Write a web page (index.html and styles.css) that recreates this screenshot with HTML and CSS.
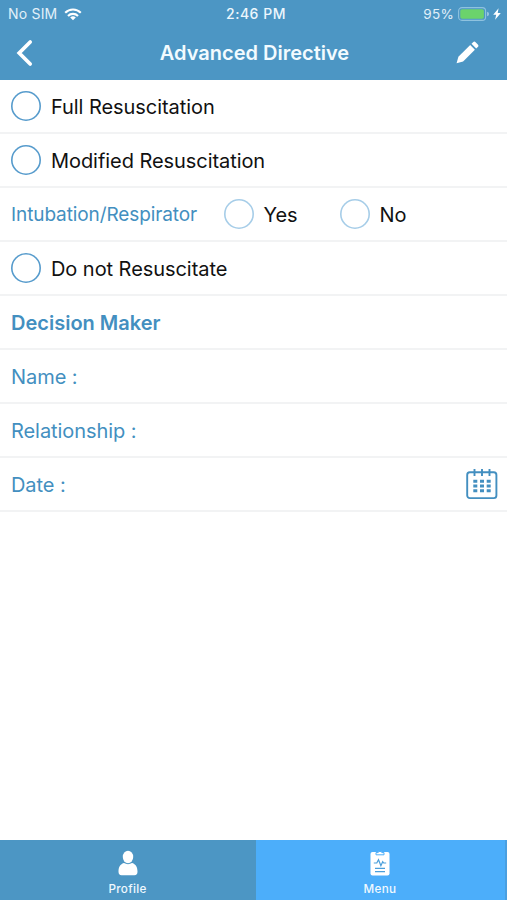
FILE: index.html
```html
<!DOCTYPE html>
<html lang="en">
<head>
<meta charset="utf-8">
<title>Advanced Directive</title>
<link rel="stylesheet" href="styles.css">
</head>
<body>
<div class="screen">
  <header class="header">
    <div class="status">
      <div class="carrier">
        <span class="sim">No SIM</span>
        <svg class="wifi" width="18" height="13" viewBox="0 0 18 13" fill="none" stroke="#fff" stroke-width="2.1"><path d="M1.2 4.8a11 11 0 0 1 15.6 0M4 8a7 7 0 0 1 10 0"/><path d="M9 12.3 6.2 9.6a4 4 0 0 1 5.6 0z" fill="#fff" stroke="none"/></svg>
      </div>
      <span class="time">2:46 PM</span>
      <div class="power">
        <span class="percent">95%</span>
        <svg class="battery" width="32" height="14" viewBox="0 0 32 14"><rect x=".6" y=".6" width="27" height="12.8" rx="3.4" fill="none" stroke="#8fc2df" stroke-width="1.1"/><rect x="2.3" y="2.3" width="23.6" height="9.4" rx="1.8" fill="#6bd36c"/><path d="M29.2 4.8q1.7.5 1.7 2.2t-1.7 2.2z" fill="#a9cfe6"/></svg>
        <svg class="bolt" width="8" height="12" viewBox="0 0 8 12"><path d="M5.6.3.2 6.7h3L2.1 11.8 7.8 5H4.7z" fill="#fff"/></svg>
      </div>
    </div>
    <div class="nav">
      <svg class="back" width="17" height="28" viewBox="0 0 17 28"><path d="M14.2 3 3.2 14l11 11" fill="none" stroke="#fff" stroke-width="3.7" stroke-linecap="round" stroke-linejoin="miter"/></svg>
      <h1 class="title">Advanced Directive</h1>
      <svg class="edit" width="23" height="23" viewBox="0 0 23 23" fill="#fff"><path d="m.6 22.2 1.8-6.4L14.2 4.1l4.7 4.7L7.1 20.5z"/><path d="m15.5 2.8 1.6-1.6q1.2-1.2 2.5 0l2.2 2.2q1.3 1.3 0 2.6l-1.6 1.5z"/></svg>
    </div>
  </header>
  <main class="form">
    <label class="row"><span class="radio"></span><span class="text">Full Resuscitation</span></label>
    <label class="row"><span class="radio"></span><span class="text">Modified Resuscitation</span></label>
    <div class="row">
      <span class="label intubation">Intubation/Respirator</span>
      <label class="option"><span class="radio light"></span><span class="text">Yes</span></label>
      <label class="option"><span class="radio light"></span><span class="text">No</span></label>
    </div>
    <label class="row"><span class="radio"></span><span class="text">Do not Resuscitate</span></label>
    <div class="row"><h2 class="label heading">Decision Maker</h2></div>
    <div class="row"><span class="label">Name :</span></div>
    <div class="row"><span class="label">Relationship :</span></div>
    <div class="row"><span class="label">Date :</span>
      <svg class="calendar" width="32" height="32" viewBox="0 0 32 32"><rect x="1.2" y="4.3" width="29.2" height="25.8" rx="2.6" fill="none" stroke="#438fc0" stroke-width="1.9"/><path d="M8.5 1v7M16 1v7M23.5 1v7" stroke="#438fc0" stroke-width="1.9"/><path d="M7.3 13.2h17.4M7.3 18h17.4M7.3 22.8h17.4" stroke="#438fc0" stroke-width="2.9" stroke-dasharray="4 2.7"/></svg>
    </div>
  </main>
  <nav class="tabs">
    <a class="tab">
      <svg width="20" height="26" viewBox="0 0 20 26" fill="#fff"><ellipse cx="10" cy="7" rx="5.2" ry="6.2"/><path d="M.5 21.5c0-5 2.500-7.700 5.500-8.400q4 2.200 8 0c3 .7 5.500 3.400 5.500 8.400q0 3.800-3 3.800h-13q-3 0-3-3.800z"/></svg>
      <span class="caption">Profile</span>
    </a>
    <a class="tab active">
      <svg width="20" height="26" viewBox="0 0 20 26"><rect x=".5" y="2" width="19" height="23.5" rx="2" fill="#fff"/><path d="M6 4.8V2.600h2.200a1.900 1.900 0 0 1 3.600 0H14v2.200z" fill="#fff" stroke="#4caefa" stroke-width="1"/><path d="M3.800 13h3l1.700-3.300 2.400 6 1.800-4 1 1.300h2.500M5 18.400h10M5 21.700h10" fill="none" stroke="#4a9fdb" stroke-width="1.2"/></svg>
      <span class="caption">Menu</span>
    </a>
  </nav>
</div>
</body>
</html>
```
FILE: styles.css
```css
* { box-sizing: border-box; }
body { margin: 0; background: #fff; font-family: Inter, "Liberation Sans", sans-serif; }
.screen { display: flex; flex-direction: column; height: 900px; width: 507px; overflow: hidden; }
.header { height: 79.5px; background: #4c96c4; color: #fff; }
.status { height: 27px; display: grid; grid-template-columns: 1fr auto 1fr; align-items: center; padding: 1px 6px 0 8px; font-size: 13.5px; line-height: 18px; white-space: nowrap; }
.carrier, .power { display: flex; align-items: center; }
.carrier { gap: 7px; }
.power { justify-content: flex-end; }
.sim, .percent { color: #e1f0f9; }
.sim { font-size: 14px; letter-spacing: .2px; }
.percent { letter-spacing: .3px; }
.time { padding-left: 3px; font-weight: 500; color: #edf7fd; font-size: 14px; letter-spacing: .5px; }
.battery { margin-left: 4px; }
.bolt { margin-left: 3px; }
.nav { height: 51px; display: grid; grid-template-columns: 80px 1fr 65px; align-items: center; padding: 0 28px 0 15px; }
.back { margin-left: 1px; }
.title { margin: 0; justify-self: center; font-size: 20px; font-weight: 600; line-height: 26px; color: #f2fbff; white-space: nowrap; }
.edit { justify-self: end; margin-bottom: 1px; }
.form { flex: 1; padding-top: .9px; }
.row { height: 53.9px; display: flex; align-items: center; padding: 0 9px 0 11px; border-bottom: 2px solid #f2f3f4; font-size: 20px; line-height: 26px; letter-spacing: -.06px; white-space: nowrap; }
.radio { width: 30px; height: 30px; flex: none; box-shadow: inset 0 0 0 1.6px #569bcc; border-radius: 50%; margin-right: 10px; }
.radio.light { box-shadow: inset 0 0 0 1.6px #a6cde8; }
.option { display: flex; align-items: center; width: 116px; }
.text { color: #111; padding-top: 2px; }
.label { color: #438fc0; padding-top: 2px; }
.intubation { width: 212.5px; font-size: 19px; letter-spacing: -.1px; }
.heading { margin: 0; font-size: 20px; font-weight: 600; letter-spacing: 0; }
.calendar { margin-left: auto; }
.tabs { height: 60px; display: flex; background: #4c96c4; }
.tab { flex: 1; display: flex; flex-direction: column; align-items: center; padding: 10px 1px 0 0; color: #f0f9ff; }
.tab.active { flex: 0 0 251px; background: #4caefa; border-right: 2px solid #4a9fe0; }
.caption { font-size: 11.7px; font-weight: 500; line-height: 16px; margin-top: 5px; letter-spacing: .3px; }
```
